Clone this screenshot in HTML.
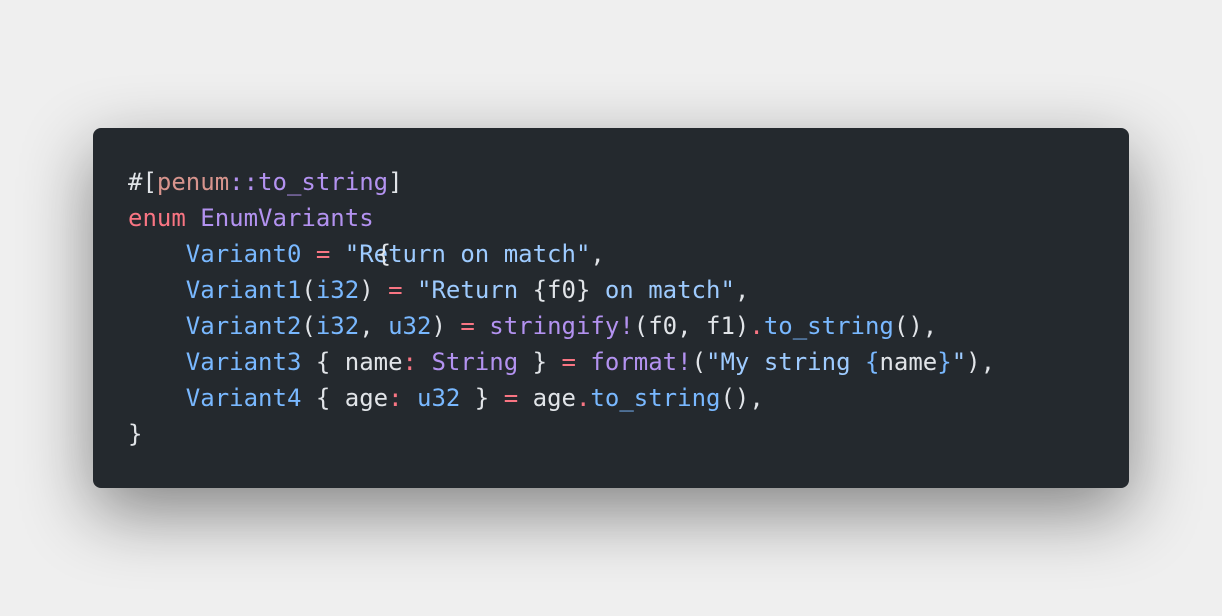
<!DOCTYPE html>
<html><head><style>
html,body{margin:0;padding:0;width:1222px;height:616px;background:#efefef;overflow:hidden}
.box{position:absolute;left:93px;top:128px;width:1036px;height:360px;background:#24292e;border-radius:8px;box-shadow:0 24px 70px rgba(0,0,0,0.45)}
pre{margin:0;position:absolute;left:128px;top:164px;font-family:"DejaVu Sans Mono","Liberation Mono",monospace;font-size:24px;line-height:36px;color:#e1e4e8}
.k{color:#f97583}.e{color:#b392f0}.b{color:#79b8ff}.s{color:#9ecbff}.p{color:#d7948d}
.ov{position:relative}.ov i{position:absolute;left:3px;top:-4px;font-style:normal;color:#e1e4e8}
</style></head><body>
<div class="box"></div>
<pre>#[<span class="p">penum</span><span class="e">::to_string</span>]
<span class="k">enum</span> <span class="e">EnumVariants</span>
    <span class="b">Variant0</span> <span class="k">=</span> <span class="s">"R<span class="ov">e<i>{</i></span>turn on match"</span>,
    <span class="b">Variant1</span>(<span class="b">i32</span>) <span class="k">=</span> <span class="s">"Return </span>{f0}<span class="s"> on match"</span>,
    <span class="b">Variant2</span>(<span class="b">i32</span>, <span class="b">u32</span>) <span class="k">=</span> <span class="e">stringify!</span>(f0, f1)<span class="k">.</span><span class="b">to_string</span>(),
    <span class="b">Variant3</span> { name<span class="k">:</span> <span class="e">String</span> } <span class="k">=</span> <span class="e">format!</span>(<span class="s">"My string </span><span class="b">{</span>name<span class="b">}</span><span class="s">"</span>),
    <span class="b">Variant4</span> { age<span class="k">:</span> <span class="b">u32</span> } <span class="k">=</span> age<span class="k">.</span><span class="b">to_string</span>(),
}</pre>
</body></html>
